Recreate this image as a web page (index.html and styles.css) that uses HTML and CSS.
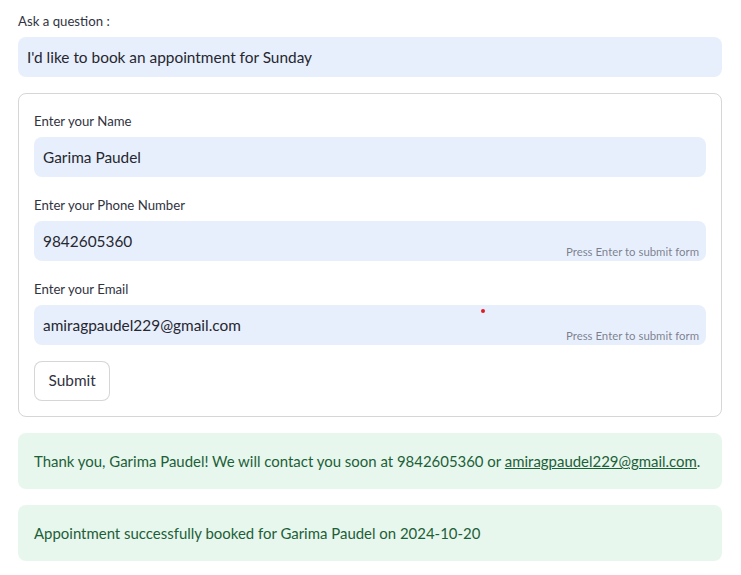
FILE: index.html
```html
<!DOCTYPE html>
<html>
<head>
<meta charset="utf-8">
<link rel="stylesheet" href="styles.css">
</head>
<body>
<main class="main">
  <div class="field">
    <label class="label">Ask a question :</label>
    <div class="input">I'd like to book an appointment for Sunday</div>
  </div>
  <form class="form">
    <div class="field">
      <label class="label">Enter your Name</label>
      <div class="input">Garima Paudel</div>
    </div>
    <div class="field">
      <label class="label">Enter your Phone Number</label>
      <div class="input">9842605360<span class="hint">Press Enter to submit form</span></div>
    </div>
    <div class="field">
      <label class="label">Enter your Email</label>
      <div class="input">amiragpaudel229@gmail.com<span class="hint">Press Enter to submit form</span><span class="dot"></span></div>
    </div>
    <div class="actions"><button type="button" class="btn">Submit</button></div>
  </form>
  <div class="alert">Thank you, Garima Paudel! We will contact you soon at 9842605360 or <a class="link" href="#">amiragpaudel229@gmail.com</a>.</div>
  <div class="alert">Appointment successfully booked for Garima Paudel on 2024-10-20</div>
</main>
</body>
</html>
```
FILE: styles.css
```css
* { box-sizing: border-box; }
html, body { margin: 0; padding: 0; background: #fff; }
body {
  font-family: "Lato", "Liberation Sans", sans-serif;
  color: rgb(49, 51, 63);
}
.main {
  width: 704px;
  margin-left: 18px;
  padding-top: 9px;
  display: flex;
  flex-direction: column;
  gap: 16px;
}
.field { display: flex; flex-direction: column; }
.label {
  font-size: 13.2px;
  height: 24px;
  line-height: 24px;
  margin-bottom: 4px;
  color: rgb(49, 51, 63);
}
.input {
  position: relative;
  height: 40px;
  line-height: 40px;
  padding-left: 9px;
  background: rgb(232, 239, 252);
  border-radius: 8px;
  font-size: 15.4px;
  color: rgb(38, 39, 48);
}
.hint {
  position: absolute;
  right: 7px;
  bottom: 2px;
  font-size: 11.4px;
  line-height: 14px;
  color: rgba(49, 51, 63, 0.6);
}
.dot {
  position: absolute;
  left: 447px;
  top: 4px;
  width: 4px;
  height: 4px;
  border-radius: 50%;
  background: #e01b24;
}
.form {
  margin: 0;
  border: 1px solid rgba(49, 51, 63, 0.2);
  border-radius: 8px;
  padding: 15px;
  display: flex;
  flex-direction: column;
  gap: 16px;
}
.actions { display: flex; }
.btn {
  font-family: inherit;
  font-size: 15.4px;
  line-height: 20px;
  color: rgb(49, 51, 63);
  background: #fff;
  border: 1px solid rgba(49, 51, 63, 0.2);
  border-radius: 8px;
  height: 40px;
  padding: 0 13.5px 2px;
}
.alert {
  height: 56px;
  line-height: 56px;
  padding: 0 16px;
  border-radius: 8px;
  background: rgb(232, 247, 237);
  color: rgb(28, 96, 56);
  font-size: 14.95px;
  white-space: nowrap;
}
.link { color: rgb(28, 96, 56); text-decoration: underline; }
```
